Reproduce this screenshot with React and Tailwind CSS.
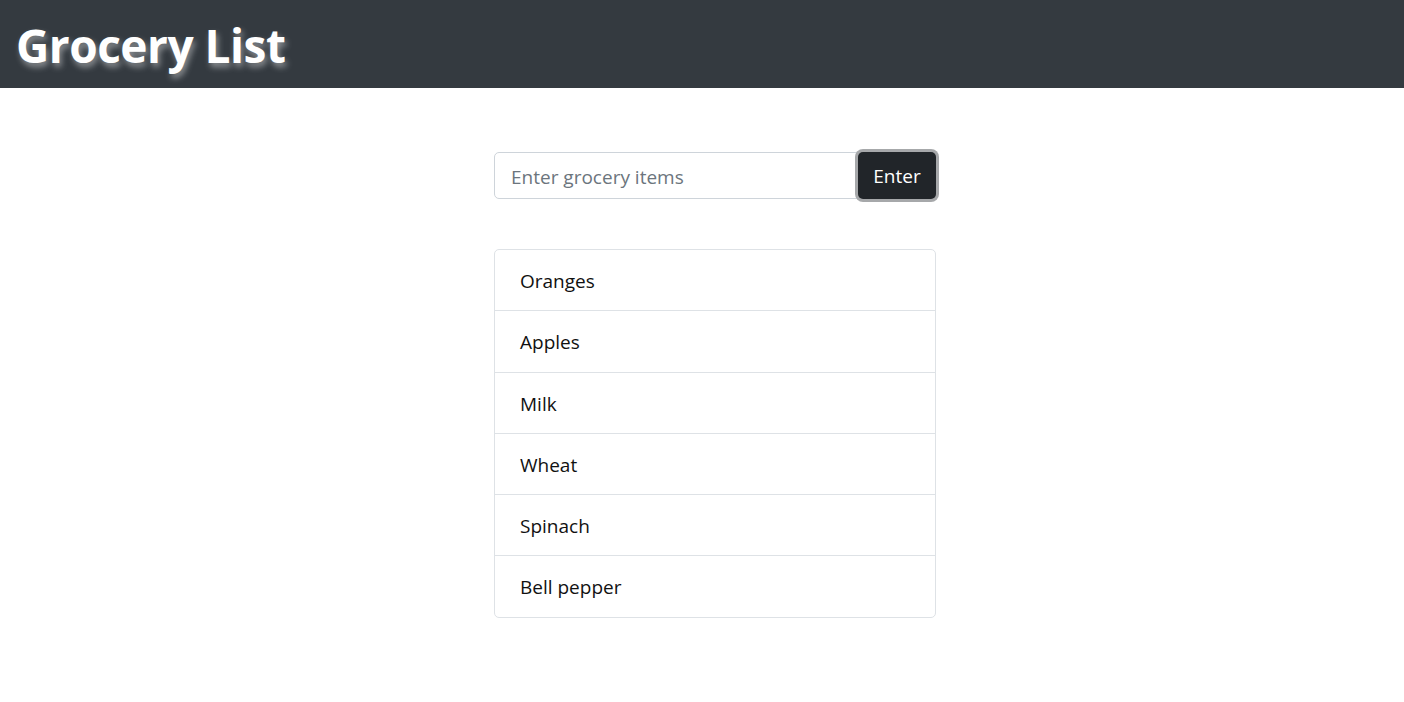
import { useState } from 'react';

const initialItems = ['Oranges', 'Apples', 'Milk', 'Wheat', 'Spinach', 'Bell pepper'];

export default function App() {
  const [items, setItems] = useState(initialItems);
  const [value, setValue] = useState('');

  const addItem = () => {
    if (!value.trim()) return;
    setItems([...items, value.trim()]);
    setValue('');
  };

  return (
    <div className="min-h-screen bg-white font-['Open_Sans',sans-serif] text-[#212529]">
      {/* Header */}
      <header className="h-[88px] bg-[#343a40] flex items-center px-4">
        <h1 className="text-[46px] font-bold text-white leading-none tracking-[-0.5px] pt-[2px] [text-shadow:2px_4px_6px_rgba(255,255,255,0.45)]">
          Grocery List
        </h1>
      </header>

      <main className="pl-[494px] pt-[64px]">
        {/* Input group */}
        <div className="flex w-[442px] h-[47px]">
          <input
            value={value}
            onChange={(e) => setValue(e.target.value)}
            placeholder="Enter grocery items"
            className="flex-1 min-w-0 border border-[#ced4da] rounded-l-[5px] px-4 pt-[3px] text-[19px] placeholder:text-[#6c757d] outline-none"
          />
          <button
            onClick={addItem}
            className="w-[78px] bg-[#212529] text-white text-[19px] pt-[2px] rounded-[5px] ring-[3px] ring-[#a6a8aa] -ml-px"
          >
            Enter
          </button>
        </div>

        {/* List */}
        <ul className="mt-[50px] w-[442px] border border-[#dee2e6] rounded-[5px] divide-y divide-[#dee2e6]">
          {items.map((item) => (
            <li key={item} className="px-[25px] pt-[16px] pb-[14.3px] text-[19px] leading-[30px] text-[#111]">
              {item}
            </li>
          ))}
        </ul>
      </main>
    </div>
  );
}
